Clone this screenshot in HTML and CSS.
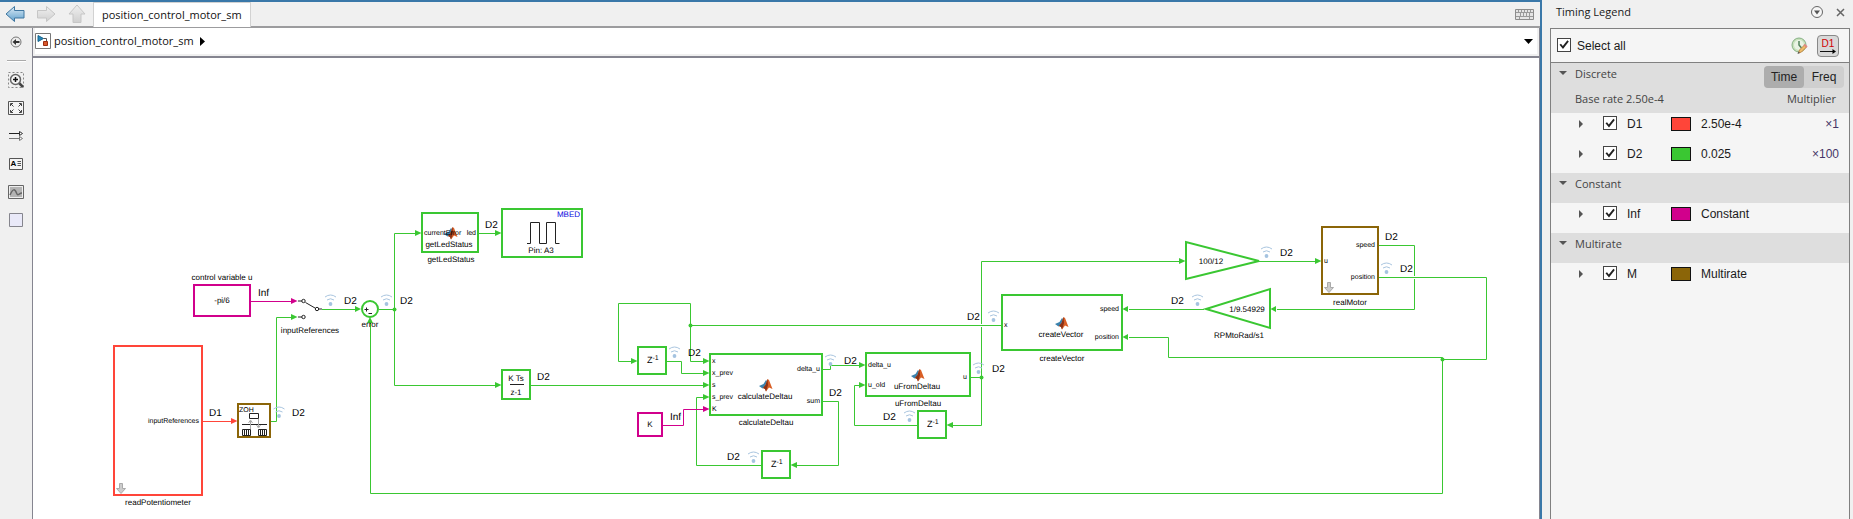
FILE: index.html
```html
<!DOCTYPE html>
<html lang="en">
<head>
<meta charset="utf-8">
<title>position_control_motor_sm</title>
<link rel="stylesheet" href="styles.css">
</head>
<body>
<div class="app">
  <section class="editor">
    <nav class="tabbar">
      <button class="nav-btn" type="button" aria-label="Back"><svg width="20" height="18" viewBox="0 0 20 18"><defs><linearGradient id="blueArrow" x1="0" y1="0" x2="0" y2="1"><stop offset="0" stop-color="#dcebf6"/><stop offset="1" stop-color="#5fa0cc"/></linearGradient><linearGradient id="greyArrow" x1="0" y1="0" x2="0" y2="1"><stop offset="0" stop-color="#f0f0f0"/><stop offset="1" stop-color="#cfcfcf"/></linearGradient></defs><path d="M1 9 9.500 1.500V5.500H19V13H9.500V16.500Z" fill="url(#blueArrow)" stroke="#3f76a0"/></svg></button>
      <button class="nav-btn" type="button" aria-label="Forward"><svg width="20" height="18" viewBox="0 0 20 18"><path d="M19 9 10.500 1.500V5.500H1.500V13H10.500V16.500Z" fill="url(#greyArrow)" stroke="#c6c6c6"/></svg></button>
      <button class="nav-btn" type="button" aria-label="Up"><svg width="18" height="20" viewBox="0 0 18 20"><path d="M9 1 17 10H13V18.500H5V10H1Z" fill="url(#greyArrow)" stroke="#c6c6c6"/></svg></button>
      <button class="tab" type="button">position_control_motor_sm</button>
      <button class="keyboard" type="button" aria-label="Keyboard"><svg width="19" height="11" viewBox="0 0 19 11"><path d="M.5.500H18.500V10.500H.5Z" fill="#e4e4e4" stroke="#8c8c8c"/><path d="M1 3.500H18M1 7.500H18M3.500 1V4M6.500 1V4M9.500 1V4M12.500 1V4M15.500 1V4M5.500 4V7M8.500 4V7M11.500 4V7M14.500 4V7M4.500 8V10M14.500 8V10" stroke="#999"/></svg></button>
    </nav>
    <div class="workspace">
      <aside class="tools">
        <button type="button" aria-label="Hide explorer bar"><svg width="12" height="12" viewBox="0 0 12 12"><circle cx="6" cy="6" r="5" fill="#eee" stroke="#777"/><path d="M2.500 6 6 3V5H9.500V7H6V9Z" fill="#333"/></svg></button>
        <hr>
        <button type="button" aria-label="Zoom"><svg width="16" height="16" viewBox="0 0 16 16"><path d="M.5.500H15.500V15.500H.5Z" fill="none" stroke="#888" stroke-dasharray="2 2"/><path d="M10.500 10.500 15 15" stroke="#444" stroke-width="2.500"/><circle cx="7.500" cy="7.500" r="5" fill="#f6f6f6" stroke="#666" stroke-width="1.500"/><path d="M5 7.500H10M7.500 5V10" stroke="#111" stroke-width="1.500"/></svg></button>
        <button type="button" aria-label="Fit to view"><svg width="16" height="14" viewBox="0 0 16 14"><path d="M.5.500H15.500V13.500H.5Z" fill="#f4f4f4" stroke="#555"/><path d="M2.500 5V2.500H5M3 3 5.500 5.500M11 2.500H13.500V5M13 3 10.500 5.500M2.500 9V11.500H5M3 11 5.500 8.500M11 11.500H13.500V9M13 11 10.500 8.500" fill="none" stroke="#444"/></svg></button>
        <button type="button" aria-label="Sample time display"><svg width="15" height="10" viewBox="0 0 15 10"><path d="M0 2.500H11" stroke="#222"/><path d="M0 7.500H11" stroke="#777"/><path d="M10.500.500 13.500 2.500 10.500 4.500Z" fill="#fff" stroke="#333"/><path d="M10.500 5.500 13.500 7.500 10.500 9.500Z" fill="#fff" stroke="#777"/></svg></button>
        <button type="button" aria-label="Annotation"><svg width="14" height="12" viewBox="0 0 14 12"><path d="M.5.500H13.500V11.500H.5Z" fill="#f4f4f4" stroke="#555"/><path d="M8.500 3.500H12M8.500 5.500H12M8.500 7.500H12" stroke="#555"/><text class="tool-letter" x="1.500" y="8">A</text></svg></button>
        <button type="button" aria-label="Image"><svg width="16" height="14" viewBox="0 0 16 14"><path d="M.5.500H15.500V13.500H.5Z" fill="#eee" stroke="#666"/><path d="M2 2H14V12H2Z" fill="#b4b4b4"/><path d="M2 10C5 3 7 4 8.500 8S11 8 14 8" fill="none" stroke="#666" stroke-width="1.500"/></svg></button>
        <button type="button" aria-label="Area"><svg width="14" height="14" viewBox="0 0 14 14"><path d="M.5.500H13.500V13.500H.5Z" fill="#e9e9f8" stroke="#85858d"/></svg></button>
      </aside>
      <main class="document">
        <header class="breadcrumb">
          <svg width="16" height="16" viewBox="0 0 16 16"><path d="M.5.500H15.500V15.500H.5Z" fill="#fff" stroke="#777"/><path d="M3 2.500 8.500 5.500 3 8.500Z" fill="#2787b8" stroke="#17648c"/><path d="M8.500 5.500H11.500V9" fill="none" stroke="#555"/><path d="M8.500 8.500H12.500V12.500H8.500Z" fill="#d9572a" stroke="#9b2c10"/></svg>
          <a class="crumb" href="#">position_control_motor_sm</a>
          <svg width="5" height="9" viewBox="0 0 5 9"><path d="M0 0 5 4.500 0 9Z"/></svg>
          <button class="crumb-menu" type="button" aria-label="History"><svg width="9" height="5" viewBox="0 0 9 5"><path d="M0 0H9L4.500 5Z"/></svg></button>
        </header>
        <div class="canvas">
<svg class="diagram" role="img" aria-label="Block diagram">
<defs>
  <symbol id="wifi" viewBox="-6 -10 12 13" overflow="visible"><circle r="1.900" fill="#a5c3e0"/><path d="M-5.500-7Q0-11 5.500-7M-3.500-4Q0-6.500 3.500-4" fill="none" stroke="#a9c5df"/></symbol>
  <symbol id="logo" viewBox="0 0 14 14" overflow="visible"><path d="M0 8 4.500 6 7 2 8 3 6 9 3.500 10.500Z" fill="#3b82ad"/><path d="M4 10 6.500 7 8.500 1 10 2 13.500 11 10 9.500 7 13.500 6 11Z" fill="#d95f26"/><path d="M8.500 1 9 7 7 13.500 6 11 4 10 6.500 7Z" fill="#8a3216"/></symbol>
  <symbol id="down" viewBox="0 0 10 11" overflow="visible"><path d="M3.500.500H6.500V5.500H9.500L5 10.500.5 5.500H3.500Z" fill="#ccc" stroke="#aaa"/></symbol>
</defs>
<g transform="translate(-33 -58)">
  <g class="wire">
    <path d="M322 309.500H356M379 309.500H394.500M394.500 233.500V385.500M394.500 233.500H416M394.500 385.500H497M479 233.500H496M531 385.500H704M271 421.500H276.500V317.500H292"/>
    <path d="M704 361.500H690.500V303.500H618.500V361.500H632M690.500 325.500H1001M667 361.500H681.500V373.500H704M823 369.500H830.500V365.500H860M823 401.500H838.500V465.500H797M761 465.500H696.500V397.500H704"/>
    <path d="M971 377.500H981.500M1180 261.500H981.500V324M981.500 327V425.500H953M917 425.500H854.500V385.500H860M1204 309.500H1129M1129 337.500H1168.500V357.500H1442.500M1259 261.500H1316"/>
    <path d="M1379 245.500H1414.500V276M1414.500 279V309.500H1277M1379 277.500H1486.500V359.500H1442.500M1442.500 357.500V493.500H370.500V322"/>
  </g>
  <path class="wire const" d="M251 301.500H292M663 425.500H683.500V409.500H704"/>
  <path class="wire fast" d="M203 421.500H232"/>
  <g class="head">
    <path d="M355 306V312L361 309ZM415 230V236L421.500 233ZM495 230V236L501.500 233ZM495 382V388L501.500 385ZM291 314V320L297.500 317ZM631 358V364L637.500 361Z"/>
    <path d="M703 358V364L709.500 361ZM703 370V376L709.500 373ZM703 382V388L709.500 385ZM703 394V400L709.500 397ZM797 462V468L790.500 465ZM859 362V368L865.500 365ZM859 382V388L865.500 385ZM953 422V428L946.500 425Z"/>
    <path d="M1179 258V264L1185.500 261ZM1315 258V264L1321.500 261ZM1128 306V312L1122.500 309ZM1128 334V340L1122.500 337ZM1276 306V312L1270.500 309ZM367 323H373L370 317Z"/>
    <circle cx="394.500" cy="309.500" r="2"/><circle cx="690.500" cy="325.500" r="2"/><circle cx="981.500" cy="377.500" r="2"/><circle cx="1442.500" cy="359.500" r="2"/>
  </g>
  <path class="head const" d="M291 298V304L297.500 301ZM703 406V412L709.500 409Z"/>
  <path class="head fast" d="M231 418V424L237.500 421Z"/>

  <g class="block">
    <circle cx="370" cy="309" r="8"/>
    <rect x="422" y="213" width="56" height="39"/>
    <rect x="502" y="209" width="80" height="48"/>
    <rect x="502" y="370" width="28" height="29"/>
    <rect x="638" y="347" width="28" height="27"/>
    <rect x="710" y="354" width="112" height="61"/>
    <rect x="762" y="451" width="28" height="27"/>
    <rect x="866" y="353" width="104" height="43"/>
    <rect x="918" y="411" width="28" height="27"/>
    <rect x="1002" y="295" width="120" height="55"/>
    <path d="M1186 242V279L1259 261Z"/>
    <path d="M1270 289V328L1206 309Z"/>
  </g>
  <g class="block const"><rect x="194" y="285" width="56" height="31"/><rect x="638" y="413" width="24" height="23"/></g>
  <rect class="block fast" x="114" y="346" width="88" height="149"/>
  <g class="block multi"><rect x="238" y="404" width="32" height="33"/><rect x="1322" y="227" width="56" height="67"/></g>

  <g class="ink">
    <path d="M298 301H302M305.500 302.500 315 308M319 309H322M298 317H302"/>
    <circle cx="303.500" cy="301" r="1.700"/><circle cx="317" cy="309" r="1.700"/><circle cx="303.500" cy="317" r="1.700"/>
    <path d="M364.500 309.500H368.500M366.500 307.500V311.500M368.500 313.500H372"/>
    <path d="M527 243.500H530.500V222.500H539.500V243.500H546.500V222.500H555.500V243.500H559.500M510 384.500H524"/>
    <path d="M249.500 413.500H258.500V418.500H249.500ZM242 424.500H267M242.500 429.500H250.500V435.500H242.500ZM258.500 429.500H266.500V435.500H258.500ZM244.500 429V436M246.500 429V436M248.500 429V436M260.500 429V436M262.500 429V436M264.500 429V436"/>
    <path class="faint" d="M250.500 429V421M248.500 423 250.500 420 252.500 423M258.500 419V427M256.500 425 258.500 428 260.500 425"/>
  </g>

  <use href="#wifi" x="324.500" y="294" width="12" height="13"/><use href="#wifi" x="380.500" y="294" width="12" height="13"/><use href="#wifi" x="273" y="406" width="12" height="13"/><use href="#wifi" x="668.500" y="346" width="12" height="13"/><use href="#wifi" x="747.500" y="451" width="12" height="13"/><use href="#wifi" x="824.500" y="354" width="12" height="13"/><use href="#wifi" x="972.500" y="362" width="12" height="13"/><use href="#wifi" x="903.500" y="410" width="12" height="13"/><use href="#wifi" x="987.500" y="310" width="12" height="13"/><use href="#wifi" x="1191.500" y="294" width="12" height="13"/><use href="#wifi" x="1260.500" y="246" width="12" height="13"/><use href="#wifi" x="1380.500" y="262" width="12" height="13"/>
  <use href="#logo" x="444" y="226" width="14" height="14"/><use href="#logo" x="759" y="378" width="14" height="14"/><use href="#logo" x="911" y="368" width="14" height="14"/><use href="#logo" x="1055" y="316" width="14" height="14"/>
  <use href="#down" x="116" y="483" width="10" height="11"/><use href="#down" x="1324" y="282" width="10" height="11"/>

  <g class="rate">
    <text x="258" y="296">Inf</text><text x="344" y="304">D2</text><text x="400" y="304">D2</text><text x="292" y="416">D2</text><text x="209" y="416">D1</text>
    <text x="485" y="228">D2</text><text x="537" y="380">D2</text><text x="688" y="356">D2</text><text x="670" y="420">Inf</text><text x="727" y="460">D2</text>
    <text x="829" y="396">D2</text><text x="844" y="364">D2</text><text x="992" y="372">D2</text><text x="883" y="420">D2</text><text x="967" y="320">D2</text>
    <text x="1171" y="304">D2</text><text x="1280" y="256">D2</text><text x="1385" y="240">D2</text><text x="1400" y="272">D2</text>
  </g>
  <g class="name">
    <text x="222" y="280">control variable u</text><text x="222" y="303">-pi/6</text><text x="310" y="333">inputReferences</text><text x="370" y="327">error</text><text x="158" y="505">readPotentiometer</text>
    <text x="449" y="247">getLedStatus</text><text x="451" y="262">getLedStatus</text><text x="541" y="253">Pin: A3</text><text x="516" y="381">K Ts</text><text x="516" y="395">z-1</text>
    <text x="650" y="427">K</text><text x="765" y="399">calculateDeltau</text><text x="766" y="425">calculateDeltau</text><text x="917" y="389">uFromDeltau</text><text x="918" y="406">uFromDeltau</text>
    <text x="1061" y="337">createVector</text><text x="1062" y="361">createVector</text><text x="1211" y="264">100/12</text><text x="1247" y="312">1/9.54929</text><text x="1239" y="338">RPMtoRad/s1</text><text x="1350" y="305">realMotor</text>
  </g>
  <g class="delay">
    <text x="647" y="363">Z<tspan class="power" dy="-3">-1</tspan></text><text x="771" y="467">Z<tspan class="power" dy="-3">-1</tspan></text><text x="927" y="427">Z<tspan class="power" dy="-3">-1</tspan></text>
  </g>
  <g class="port">
    <text x="239" y="412">ZOH</text><text x="424" y="235">currentError</text><text x="712" y="363">x</text><text x="712" y="375">x_prev</text><text x="712" y="387">s</text><text x="712" y="399">s_prev</text><text x="712" y="411">K</text>
    <text x="868" y="367">delta_u</text><text x="868" y="387">u_old</text><text x="1004" y="327">x</text><text x="1324" y="263">u</text>
  </g>
  <g class="port out">
    <text x="199" y="423">inputReferences</text><text x="476" y="235">led</text><text class="mbed" x="580" y="217">MBED</text><text x="820" y="371">delta_u</text><text x="820" y="403">sum</text><text x="967" y="379">u</text>
    <text x="1119" y="311">speed</text><text x="1119" y="339">position</text><text x="1375" y="247">speed</text><text x="1375" y="279">position</text>
  </g>
</g>
</svg>
        </div>
      </main>
    </div>
  </section>

  <aside class="legend">
    <header class="legend-title">
      <h1>Timing Legend</h1>
      <button type="button" aria-label="Panel menu"><svg width="12" height="12" viewBox="0 0 12 12"><circle cx="6" cy="6" r="5.500" fill="#f6f6f6" stroke="#666"/><path d="M3 4.500H9L6 8.500Z" fill="#555"/></svg></button>
      <button type="button" aria-label="Close"><svg width="9" height="9" viewBox="0 0 9 9"><path d="M1 1 8 8M8 1 1 8" stroke="#666" stroke-width="1.500"/></svg></button>
    </header>
    <div class="legend-box">
      <div class="select-row">
        <label><input type="checkbox" checked>Select all</label>
        <button class="plain" type="button" aria-label="Edit timing"><svg width="18" height="18" viewBox="0 0 18 18"><circle cx="8" cy="8" r="7" fill="#c8e2bc" stroke="#86b084"/><circle cx="8" cy="8" r="5" fill="#e9f3e4"/><path d="M8 4V8L10.500 11" fill="none" stroke="#52825a" stroke-width="1.500"/><path d="M7.500 16 8.500 13 13.500 8 15.500 10 10.500 15Z" fill="#f0bd68" stroke="#c08a4c"/><path d="M13 7.500 16 10" stroke="#e08a80" stroke-width="2"/><path d="M6.500 17 7.500 14.500 9 16Z" fill="#555"/></svg></button>
        <button class="annot" type="button" aria-label="Show annotations D1"><span>D1</span><svg width="16" height="5" viewBox="0 0 16 5"><path d="M0 2.500H13" stroke="#111"/><path d="M12.500 0 16 2.500 12.500 5Z"/></svg></button>
      </div>
      <section>
        <header class="group tall">
          <h2>Discrete</h2>
          <div class="switch"><button class="on" type="button">Time</button><button type="button">Freq</button></div>
          <p>Base rate 2.50e-4</p><p class="end">Multiplier</p>
        </header>
        <div class="row"><i class="twist"></i><label><input type="checkbox" checked>D1</label><span class="swatch fast"></span><span>2.50e-4</span><span class="mult">×1</span></div>
        <div class="row"><i class="twist"></i><label><input type="checkbox" checked>D2</label><span class="swatch slow"></span><span>0.025</span><span class="mult">×100</span></div>
      </section>
      <section>
        <header class="group"><h2>Constant</h2></header>
        <div class="row"><i class="twist"></i><label><input type="checkbox" checked>Inf</label><span class="swatch const"></span><span>Constant</span></div>
      </section>
      <section>
        <header class="group"><h2>Multirate</h2></header>
        <div class="row"><i class="twist"></i><label><input type="checkbox" checked>M</label><span class="swatch multi"></span><span>Multirate</span></div>
      </section>
    </div>
  </aside>
</div>
</body>
</html>
```
FILE: styles.css
```css
:root {
  --slow: #3ac732;
  --fast: #ff4539;
  --const: #d1008c;
  --multi: #8b6508;
  --edge: #858590;
  --ui: "Open Sans", "Noto Sans", sans-serif;
  --plain: "Liberation Sans", Arial, sans-serif;
}

* { box-sizing: border-box; }

body { margin: 0; background: #f0f0f0; color: #1a1a1a; font: 11px/16px var(--ui); }

button { padding: 0; border: 0; background: none; color: inherit; font: inherit; }
svg { display: block; }
h1, h2, p { margin: 0; font: inherit; }

.app { display: flex; height: 100vh; overflow: hidden; }

.editor {
  display: flex;
  flex: 1;
  flex-direction: column;
  min-width: 0;
  border-top: 2px solid #3a78a9;
  border-right: 2px solid #3a78a9;
}

/* Navigation and document tabs */
.tabbar { display: flex; align-items: center; height: 26px; padding: 0 6px 0 5px; border-bottom: 2px solid #9c9c9e; }
.nav-btn { display: flex; justify-content: center; width: 20px; margin-right: 11px; }
.nav-btn:nth-child(3) { margin-right: 6px; }
.tab {
  align-self: flex-start;
  height: 25px;
  padding: 0 8px;
  border: 1px solid #d2d2d2;
  border-bottom: 0;
  background: #fff;
  color: #111;
  white-space: nowrap;
}
.keyboard { margin-left: auto; }

.workspace { display: flex; flex: 1; min-height: 0; }

.tools { display: flex; flex-direction: column; align-items: center; width: 32px; padding-top: 7px; }
.tools button { display: flex; align-items: center; justify-content: center; width: 20px; height: 28px; flex: none; }
.tools button:first-child { height: 14px; }
.tools hr { width: 19px; margin: 11px 0 4px; border: 0; border-top: 1px solid #aaa; border-bottom: 1px solid #fff; }
.tool-letter { font: bold 8px var(--plain); }

.document { display: flex; flex: 1; flex-direction: column; min-width: 0; border: 1px solid var(--edge); border-width: 0 1px; background: #fff; }
.breadcrumb {
  display: flex;
  align-items: center;
  gap: 3px;
  height: 28px;
  margin-bottom: 2px;
  padding-right: 4px;
  border: 2px solid #f0f0f0;
  border-top: 0;
  box-shadow: 0 2px 0 var(--edge);
}
.crumb { margin-right: 3px; color: #111; text-decoration: none; }
.crumb-menu { margin-left: auto; }

.canvas { flex: 1; min-height: 0; overflow: hidden; }
.diagram { width: 100%; height: 100%; font-family: var(--plain); text-rendering: geometricPrecision; }

/* Diagram */
.wire { fill: none; stroke: var(--slow); }
.wire.const { stroke: var(--const); }
.wire.fast { stroke: var(--fast); }
.head { fill: var(--slow); }
.head.const { fill: var(--const); }
.head.fast { fill: var(--fast); }
.block { fill: none; stroke: var(--slow); stroke-width: 2px; }
.block.const { stroke: var(--const); }
.block.fast { stroke: var(--fast); }
.block.multi { stroke: var(--multi); }
.ink { fill: none; stroke: #222; }
.ink .faint { stroke: #aaa; }
.rate { font-size: 10px; }
.name { font-size: 8px; text-anchor: middle; }
.delay { font-size: 9px; }
.power { font-size: 7px; }
.port { font-size: 7px; }
.port.out { text-anchor: end; }
.port .mbed { fill: #0a0ae0; font-size: 8px; }

/* Timing legend */
.legend { display: flex; flex-direction: column; width: 311px; padding: 0 3px 0 8px; }
.legend-title { display: flex; align-items: center; gap: 13px; height: 28px; padding: 0 5px 4px 6px; }
.legend-title h1 { margin-right: auto; }
.legend-box { flex: 1; border: 1px solid #808080; border-bottom: 0; background: #f5f5f5; font-size: 12px; font-family: var(--plain); }

.legend input {
  position: relative;
  width: 14px;
  height: 14px;
  margin: 0;
  border: 1px solid #444;
  background: #fff;
  appearance: none;
}
.legend input:checked::after {
  content: "";
  position: absolute;
  inset: 1px;
  background: #222;
  clip-path: polygon(5% 52%, 20% 42%, 38% 65%, 84% 8%, 98% 20%, 40% 94%);
}

.select-row { display: flex; align-items: center; height: 34px; padding: 0 10px 0 6px; border-bottom: 1px solid #808080; }
.select-row label { display: flex; gap: 6px; margin-right: auto; }
.plain { margin-right: 8px; }
.annot {
  display: flex;
  flex-direction: column;
  align-items: center;
  width: 22px;
  height: 22px;
  padding-top: 2px;
  border: 1px solid #888;
  border-radius: 4px;
  background: #d8d8d8;
  color: #d00000;
  font: 10px/11px var(--plain);
}

.group {
  position: relative;
  display: grid;
  grid-template-columns: 1fr auto;
  height: 30px;
  padding: 3px 13px 0 24px;
  background: #dedede;
  color: #444;
  font-size: 11px;
  font-family: var(--ui);
}
.group::before {
  content: "";
  position: absolute;
  top: 8px;
  left: 8px;
  border: 4px solid transparent;
  border-top-color: #555;
  border-bottom: 0;
}
.group.tall { height: 50px; row-gap: 3px; grid-template-rows: 22px 20px; }
.group.tall .end { text-align: right; }
.switch { display: flex; width: 80px; margin-right: -8px; border-radius: 4px; background: #cfcfcf; color: #222; font: 12px/22px var(--plain); }
.switch button { flex: 1; border-radius: 4px; }
.switch .on { background: #adadad; }

.row { display: grid; grid-template-columns: 24px 68px 30px 1fr auto; align-items: center; height: 30px; padding: 0 10px 8px 28px; }
.row label { display: flex; gap: 10px; }
.twist { width: 4px; height: 8px; background: #555; clip-path: polygon(0 0, 100% 50%, 0 100%); }
.swatch { width: 20px; height: 14px; border: 1px solid #111; }
.swatch.fast { background: var(--fast); }
.swatch.slow { background: var(--slow); }
.swatch.const { background: var(--const); }
.swatch.multi { background: var(--multi); }
.mult { color: #453567; }
```
